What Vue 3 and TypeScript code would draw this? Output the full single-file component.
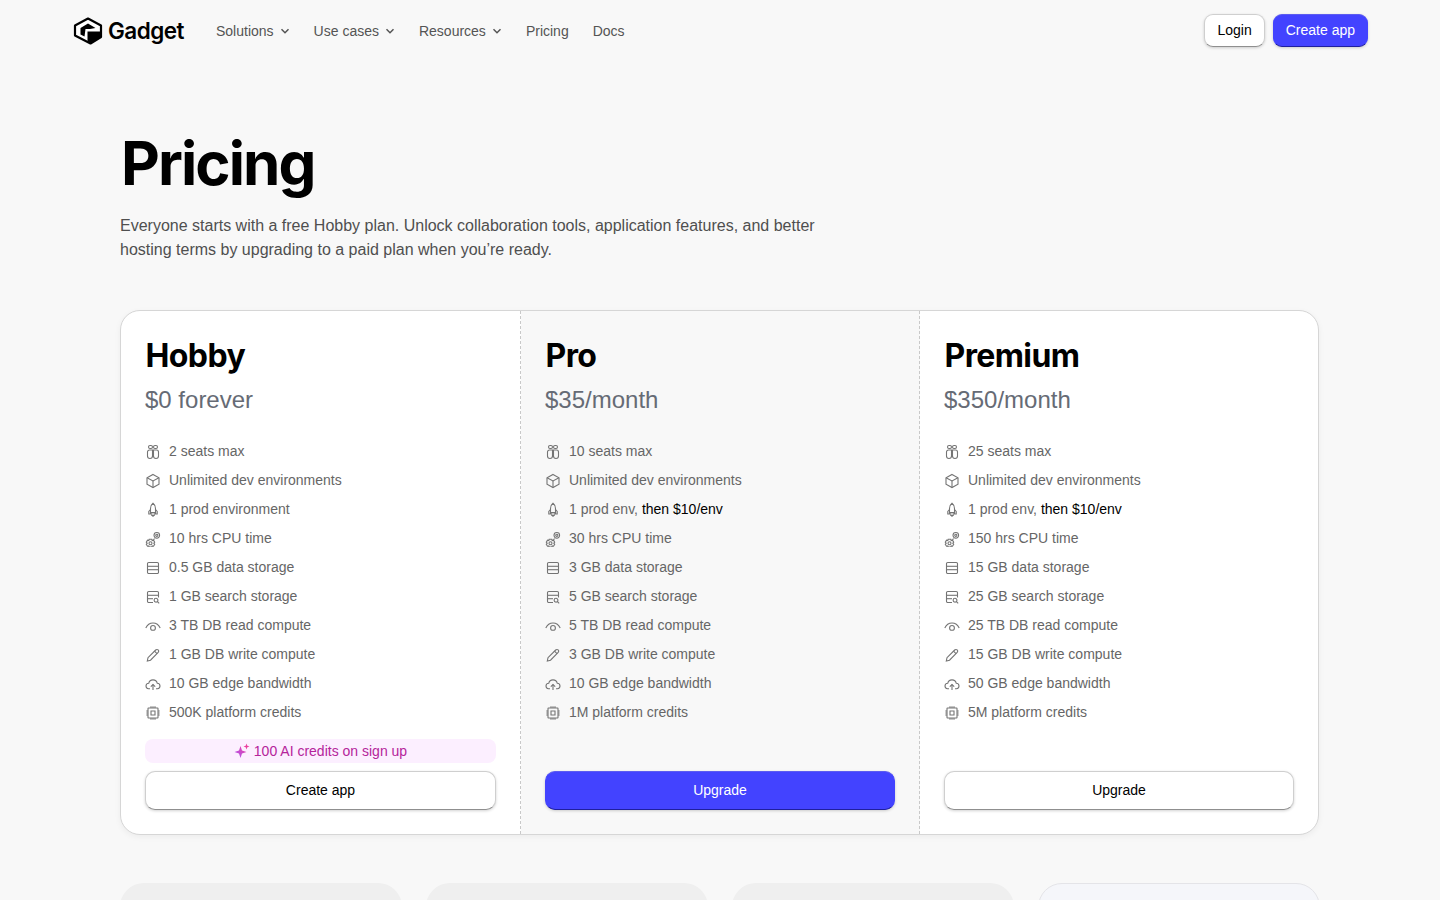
<template>
  <div class="page">
    <header class="nav">
      <div class="nav-left">
        <a class="logo">
          <svg width="30" height="28" viewBox="0 0 30 28">
            <path d="M15 1.500 28 8.500V20L17.500 26.500 2 18.500V8.500Z" fill="#fff" stroke="#000" stroke-width="2.200" stroke-linejoin="round" />
            <path d="M7.500 17.500V11L15 6.500 22.500 11 17 12H12.500L11.500 19.500Z" fill="#000" />
            <path d="M14.500 14.500H27.500V20L17.500 26.500 14.500 25Z" fill="#000" />
          </svg>
          <span class="logo-text">Gadget</span>
        </a>
        <nav class="links">
          <a v-for="l in navLinks" :key="l.label" class="link">
            {{ l.label }}
            <svg v-if="l.menu" width="10" height="10" viewBox="0 0 10 10" fill="none">
              <path d="M1.500 3.200 5 6.700 8.500 3.200" stroke="#555" stroke-width="1.500" />
            </svg>
          </a>
        </nav>
      </div>
      <div class="nav-right">
        <button class="btn btn-white btn-small">Login</button>
        <button class="btn btn-blue btn-small">Create app</button>
      </div>
    </header>

    <main class="main">
      <h1 class="title">Pricing</h1>
      <p class="lead">
        Everyone starts with a free Hobby plan. Unlock collaboration tools, application features, and better hosting terms by upgrading to a paid plan when you’re ready.
      </p>

      <section class="plans">
        <div v-for="plan in plans" :key="plan.name" class="plan" :class="{ tinted: plan.tinted }">
          <h2 class="plan-name">{{ plan.name }}</h2>
          <div class="plan-price">{{ plan.price }}</div>
          <ul class="features">
            <li v-for="(f, i) in plan.features" :key="i" class="feature">
              <svg class="ficon" width="16" height="16" viewBox="0 0 16 16" fill="none" stroke="#747474" stroke-width="1.100">
                <path v-for="d in icons[i]" :key="d" :d="d" />
              </svg>
              <span>{{ f[0] }}<em v-if="f[1]" class="hl">{{ f[1] }}</em></span>
            </li>
          </ul>
          <div class="plan-foot">
            <div v-if="plan.promo" class="promo">
              <svg width="16" height="16" viewBox="0 0 16 16">
                <defs>
                  <linearGradient id="spark" x1="0" y1="1" x2="1" y2="0">
                    <stop offset="0" stop-color="#a855f7" />
                    <stop offset="1" stop-color="#ec3f9e" />
                  </linearGradient>
                </defs>
                <path d="M6.500 3 8 7.500 12.500 9 8 10.500 6.500 15 5 10.500 .5 9 5 7.500Z" fill="url(#spark)" />
                <path d="M12.500 .5 13.300 2.700 15.500 3.500 13.300 4.300 12.500 6.500 11.700 4.300 9.500 3.500 11.700 2.700Z" fill="#ec3f9e" />
              </svg>
              100 AI credits on sign up
            </div>
            <button class="btn btn-large" :class="plan.primary ? 'btn-blue' : 'btn-white'">{{ plan.cta }}</button>
          </div>
        </div>
      </section>

      <section class="lower">
        <div class="lower-card"></div>
        <div class="lower-card"></div>
        <div class="lower-card"></div>
        <div class="lower-card lower-light"></div>
      </section>
    </main>
  </div>
</template>

<script setup lang="ts">
interface Plan {
  name: string
  price: string
  features: [string, string?][]
  cta: string
  primary?: boolean
  tinted?: boolean
  promo?: boolean
}

const navLinks = [
  { label: 'Solutions', menu: true },
  { label: 'Use cases', menu: true },
  { label: 'Resources', menu: true },
  { label: 'Pricing', menu: false },
  { label: 'Docs', menu: false },
]

// one entry per feature row, same order in every plan
const icons: string[][] = [
  // seats
  [
    'M5.500 1.500H6a1.500 1.500 0 0 1 0 3H5a1.500 1.500 0 0 1 0-3Z',
    'M10 1.500h1a1.500 1.500 0 0 1 0 3h-1a1.500 1.500 0 0 1 0-3Z',
    'M4.500 6H7.500V12A2.500 2.500 0 0 1 2.500 12V8A2 2 0 0 1 4.500 6Z',
    'M8.500 6H11.500A2 2 0 0 1 13.500 8V12A2.500 2.500 0 0 1 8.500 12Z',
  ],
  // environments
  ['M8 1.500 14 4.800V11.200L8 14.500 2 11.200V4.800Z', 'M2 4.800 8 8 14 4.800', 'M8 8V14.500'],
  // prod env
  [
    'M8 1.200C9.800 2.500 10.500 4.500 10.500 6.500V10.500H5.500V6.500C5.500 4.500 6.200 2.500 8 1.200Z',
    'M5.500 7.500 3.800 9.500V12H5.500V10.500',
    'M10.500 7.500 12.200 9.500V12H10.500V10.500',
    'M6.800 11V13.500H9.200V11',
    'M8 13.500V15',
  ],
  // cpu time
  [
    'M4.200 8.200H6.800L7.200 9.500 8.500 9.200 9.700 11.200 8.800 12.200 9.700 13.200 8.500 15.200 7.200 14.900 6.800 16H4.200L3.800 14.900 2.500 15.200 1.300 13.200 2.200 12.200 1.300 11.200 2.500 9.200 3.800 9.500Z',
    'M5.500 10.700a1.500 1.500 0 1 1 0 3 1.500 1.500 0 0 1 0-3Z',
    'M11.800 1.500a2.800 2.800 0 1 1 0 5.600 2.800 2.800 0 0 1 0-5.600Z',
    'M11.800 3.200a1.100 1.100 0 1 1 0 2.200 1.100 1.100 0 0 1 0-2.200Z',
    'M8.500 9 9.500 7.500',
  ],
  // data storage
  [
    'M3.700 2.500H12.300A1.200 1.200 0 0 1 13.500 3.700V12.300A1.200 1.200 0 0 1 12.300 13.500H3.700A1.200 1.200 0 0 1 2.500 12.300V3.700A1.200 1.200 0 0 1 3.700 2.500Z',
    'M2.500 6.300H13.500',
    'M2.500 9.700H13.500',
  ],
  // search storage
  [
    'M8 13.500H3.700A1.200 1.200 0 0 1 2.500 12.300V3.700A1.200 1.200 0 0 1 3.700 2.500H12.300A1.200 1.200 0 0 1 13.500 3.700V8.500',
    'M2.500 6.300H13.500',
    'M2.500 9.700H8',
    'M11 9.300a1.900 1.900 0 1 1 0 3.800 1.900 1.900 0 0 1 0-3.800Z',
    'M12.400 12.600 14.200 14.400',
  ],
  // read compute
  ['M.8 10C2.300 6.700 5 5 8 5S13.700 6.700 15.200 10', 'M8 7.500a2.400 2.400 0 1 1 0 4.800 2.400 2.400 0 0 1 0-4.800Z'],
  // write compute
  ['M2.300 14 3 10.700 10.700 3A1.600 1.600 0 0 1 13.200 5.400L5.500 13.200Z', 'M9.500 4.200 12 6.700'],
  // bandwidth
  [
    'M5 12.800H3.500A2.700 2.700 0 0 1 1 10.100 2.800 2.800 0 0 1 3.700 7.300 4.400 4.400 0 0 1 12.300 7.300 2.800 2.800 0 0 1 15 10.100 2.700 2.700 0 0 1 12.500 12.800H11',
    'M8 14V8.500',
    'M5.800 10.700 8 8.500 10.200 10.700',
  ],
  // platform credits
  [
    'M3.500 3H12.500A.5.500 0 0 1 13 3.500V12.500A.5.500 0 0 1 12.500 13H3.500A.5.500 0 0 1 3 12.500V3.500A.5.500 0 0 1 3.500 3Z',
    'M6 6H10V10H6Z',
    'M6 1.300V3M8 1.300V3M10 1.300V3M6 13V14.700M8 13V14.700M10 13V14.700M1.300 6H3M1.300 8H3M1.300 10H3M13 6H14.700M13 8H14.700M13 10H14.700',
  ],
]

const makeFeatures = (
  seats: string,
  env: [string, string?],
  cpu: string,
  data: string,
  search: string,
  read: string,
  write: string,
  edge: string,
  credits: string,
): [string, string?][] => [
  [`${seats} seats max`],
  ['Unlimited dev environments'],
  env,
  [`${cpu} hrs CPU time`],
  [`${data} GB data storage`],
  [`${search} GB search storage`],
  [`${read} TB DB read compute`],
  [`${write} GB DB write compute`],
  [`${edge} GB edge bandwidth`],
  [`${credits} platform credits`],
]

const paidEnv: [string, string] = ['1 prod env, ', 'then $10/env']

const plans: Plan[] = [
  {
    name: 'Hobby',
    price: '$0 forever',
    features: makeFeatures('2', ['1 prod environment'], '10', '0.5', '1', '3', '1', '10', '500K'),
    cta: 'Create app',
    promo: true,
  },
  {
    name: 'Pro',
    price: '$35/month',
    features: makeFeatures('10', paidEnv, '30', '3', '5', '5', '3', '10', '1M'),
    cta: 'Upgrade',
    primary: true,
    tinted: true,
  },
  {
    name: 'Premium',
    price: '$350/month',
    features: makeFeatures('25', paidEnv, '150', '15', '25', '25', '15', '50', '5M'),
    cta: 'Upgrade',
  },
]
</script>

<style>
html,
body {
  background: #f8f8f8;
  overflow: hidden;
}
</style>

<style scoped>
.page {
  height: 900px;
  overflow: hidden;
  background: #f8f8f8;
  font-family: "Liberation Sans", Arial, sans-serif;
  color: #000;
}

.nav {
  display: flex;
  align-items: center;
  justify-content: space-between;
  height: 61px;
  padding: 0 72px 0 73px;
}

.nav-left {
  display: flex;
  align-items: center;
}

.logo {
  display: flex;
  align-items: center;
  gap: 5px;
  width: 143px;
}

.logo-text {
  font-family: Inter, sans-serif;
  font-size: 22.500px;
  font-weight: 600;
  letter-spacing: -0.55px;
}

.links {
  display: flex;
  align-items: center;
  gap: 24px;
}

.link {
  display: flex;
  align-items: center;
  gap: 6px;
  font-size: 14px;
  color: #545454;
}

.nav-right {
  display: flex;
  align-items: center;
  gap: 8px;
}

.btn {
  box-sizing: border-box;
  padding-bottom: 2px;
  font-family: inherit;
  font-size: 14px;
  cursor: pointer;
}

.btn-small {
  height: 33px;
  padding-left: 12px;
  padding-right: 12px;
  border-radius: 9px;
}

.btn-white {
  background: #fff;
  color: #000;
  border: 1px solid #cfcfcf;
  border-bottom-color: #8f8f8f;
  box-shadow: 0 1px 3px rgba(0, 0, 0, 0.18);
}

.btn-blue {
  background: #4343ff;
  color: #fff;
  border: 1px solid #4343ff;
  border-top-color: #5c5cf0;
  border-bottom-color: #1f1f9e;
  box-shadow: 0 1px 3px rgba(0, 0, 0, 0.18);
}

.main {
  width: 1199px;
  margin-left: 120px;
}

.title {
  margin: 0 0 0 1px;
  padding-top: 66px;
  font-family: Inter, sans-serif;
  font-size: 60px;
  line-height: 72px;
  font-weight: 700;
  letter-spacing: -1.900px;
}

.lead {
  width: 720px;
  margin: 15px 0 0;
  font-size: 16px;
  line-height: 24px;
  color: #4f4f4f;
}

.plans {
  box-sizing: border-box;
  display: grid;
  grid-template-columns: 400px 399px 1fr;
  height: 525px;
  margin-top: 48px;
  background: #fff;
  border: 1px solid #d6d6d6;
  border-radius: 20px;
  box-shadow: 0 2px 6px rgba(0, 0, 0, 0.05);
  overflow: hidden;
}

.plan {
  display: flex;
  flex-direction: column;
  padding: 24px;
  border-right: 1px dashed #c9c9c9;
}

.plan:last-child {
  border-right: 0;
}

.tinted {
  background: #f8f8f8;
}

.plan-name {
  margin: 1px 0 0 0.5px;
  font-family: Inter, sans-serif;
  font-size: 32px;
  line-height: 40px;
  font-weight: 700;
  letter-spacing: -0.6px;
}

.plan-price {
  margin-top: 8px;
  font-size: 24px;
  line-height: 32px;
  color: #666b75;
}

.features {
  list-style: none;
  margin: 20px 0 0;
  padding: 0;
}

.feature {
  display: flex;
  align-items: center;
  gap: 8px;
  height: 29px;
  font-size: 14px;
  color: #666;
}

.ficon {
  flex: none;
  margin-top: 2px;
}

.hl {
  font-style: normal;
  color: #000;
}

.plan-foot {
  display: flex;
  flex-direction: column;
  gap: 8px;
  margin-top: auto;
}

.promo {
  display: flex;
  align-items: center;
  justify-content: center;
  gap: 4px;
  height: 24px;
  border-radius: 8px;
  background: #fcefff;
  font-size: 14px;
  color: #b5249b;
}

.btn-large {
  width: 100%;
  height: 39px;
  border-radius: 10px;
}

.lower {
  display: grid;
  grid-template-columns: repeat(4, 1fr);
  gap: 24px;
  margin: 48px -1px 0 0;
}

.lower-card {
  height: 200px;
  border-radius: 24px;
  background: #efefef;
}

.lower-light {
  background: #f5f6fa;
  border: 1px solid #e4e4e8;
}
</style>
